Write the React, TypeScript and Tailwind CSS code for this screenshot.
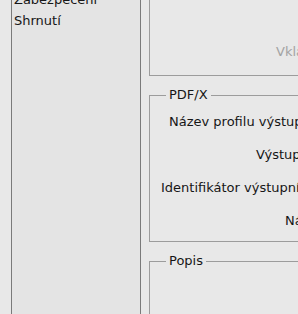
import React from "react";

const rows = [
  { label: "Název profilu výstupní podmínky:", pad: "pl-[19px]" },
  { label: "Výstupní podmínka:", pad: "pl-[106px]" },
  { label: "Identifikátor výstupních podmínek:", pad: "pl-[11px]" },
  { label: "Název registru:", pad: "pl-[135px]" },
];

export default function App() {
  return (
    <div
      className="w-[298px] h-[314px] overflow-hidden bg-[#e8e8e8] flex text-[13px] text-[#161616]"
      style={{ fontFamily: '"DejaVu Sans", "Liberation Sans", sans-serif' }}
    >
      {/* Left: category list */}
      <div className="ml-[11px] w-[130px] shrink-0 h-full border-x border-[#7a7a7a] bg-[#e4e4e4] pl-[2px]">
        <div className="-mt-[11px] leading-[21px]">
          <div>Zabezpečení</div>
          <div>Shrnutí</div>
        </div>
      </div>

      {/* Right: settings groups */}
      <div className="ml-[8px] w-[220px] shrink-0 flex flex-col">
        <div className="h-[76px] shrink-0 border-l border-b border-[#9c9c9c] flex items-end pb-[16px] pl-[126px]">
          <span className="text-[#a3a3a3] whitespace-nowrap leading-[14px]">Vkládat náhledy stránek</span>
        </div>

        <fieldset className="mt-[11px] shrink-0 border border-[#9c9c9c] pt-[2px] pb-[4px]">
          <legend className="ml-[16px] px-[3px] leading-[16px]">PDF/X</legend>
          {rows.map((r) => (
            <div key={r.label} className={`h-[33px] leading-[33px] whitespace-nowrap ${r.pad}`}>
              {r.label}
            </div>
          ))}
        </fieldset>

        <fieldset className="mt-[11px] shrink-0 border border-[#9c9c9c] h-[120px]">
          <legend className="ml-[16px] px-[3px] leading-[16px]">Popis</legend>
        </fieldset>
      </div>
    </div>
  );
}
